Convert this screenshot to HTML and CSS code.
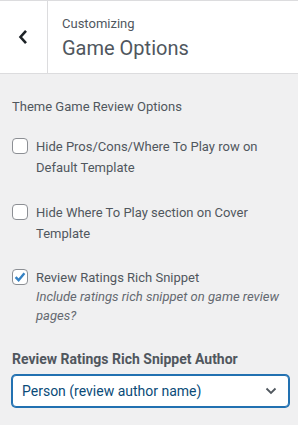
FILE: index.html
```html
<!DOCTYPE html>
<html>
<head>
<meta charset="utf-8">
<link rel="stylesheet" href="styles.css">
</head>
<body>
<div class="header">
  <div class="back">
    <svg width="10" height="16" viewBox="0 0 10 16"><path d="M8 1.8 L2.5 8 L8 14.2" fill="none" stroke="#1d2327" stroke-width="2.6"/></svg>
  </div>
  <div class="title">
    <div class="sub">Customizing</div>
    <div class="main">Game Options</div>
  </div>
</div>
<div class="content">
  <div class="section-desc">Theme Game Review Options</div>
  <div class="check-row first">
    <span class="box"></span>
    <span class="label">Hide Pros/Cons/Where To Play row on Default Template</span>
  </div>
  <div class="check-row second">
    <span class="box"></span>
    <span class="label">Hide Where To Play section on Cover Template</span>
  </div>
  <div class="check-row third">
    <span class="box checked"><svg width="14" height="14" viewBox="0 0 14 14"><path d="M2.6 7.2 L5.6 10.2 L11.4 3.2" fill="none" stroke="#3582c4" stroke-width="2.4"/></svg></span>
    <span class="label">Review Ratings Rich Snippet<span class="desc">Include ratings rich snippet on game review pages?</span></span>
  </div>
  <div class="control-title">Review Ratings Rich Snippet Author</div>
  <div class="select">
    <span>Person (review author name)</span>
    <svg width="12" height="8" viewBox="0 0 12 8"><path d="M1.5 1.5 L6 6 L10.5 1.5" fill="none" stroke="#50575e" stroke-width="1.8"/></svg>
  </div>
</div>
</body>
</html>
```
FILE: styles.css
```css
* { box-sizing: border-box; }
body {
  margin: 0;
  background: #f0f0f1;
  font-family: Roboto, "Noto Sans", sans-serif;
  color: #50575e;
}
.header {
  display: flex;
  height: 74px;
  background: #fff;
  border-top: 1px solid #dcdcde;
  border-bottom: 1px solid #dcdcde;
}
.back {
  width: 48px;
  border-right: 1px solid #dcdcde;
  display: flex;
  align-items: center;
  justify-content: center;
  padding-right: 1px;
}
.title {
  padding: 13px 0 0 14px;
}
.sub {
  font-size: 13px;
  line-height: 20px;
}
.main {
  font-size: 20px;
  line-height: 28px;
}
.content {
  padding: 20px 9px 12px 12px;
}
.section-desc {
  font-size: 13px;
  line-height: 26px;
}
.check-row {
  display: flex;
  align-items: flex-start;
  font-size: 13px;
  line-height: 21px;
}
.check-row.first { margin-top: 16px; }
.check-row.second { margin-top: 24px; }
.check-row.third { margin-top: 23px; }
.box {
  flex: none;
  width: 16px;
  height: 16px;
  margin-top: 2px;
  margin-right: 8px;
  border: 1px solid #8c8f94;
  border-radius: 4px;
  background: #fff;
  display: flex;
  align-items: center;
  justify-content: center;
}
.label { display: block; padding-right: 8px; }
.desc {
  display: block;
  font-style: italic;
  color: #646970;
  line-height: 18.5px;
}
.control-title {
  margin-top: 23px;
  font-size: 14px;
  font-weight: 700;
  line-height: 22px;
}
.select {
  margin-top: 5px;
  height: 32px;
  display: flex;
  align-items: center;
  justify-content: space-between;
  padding: 0 11px 0 9px;
  background: #fff;
  border: 1px solid #2271b1;
  box-shadow: 0 0 0 1px #2271b1;
  border-radius: 4px;
  color: #0a4b78;
  font-size: 14px;
}
```
